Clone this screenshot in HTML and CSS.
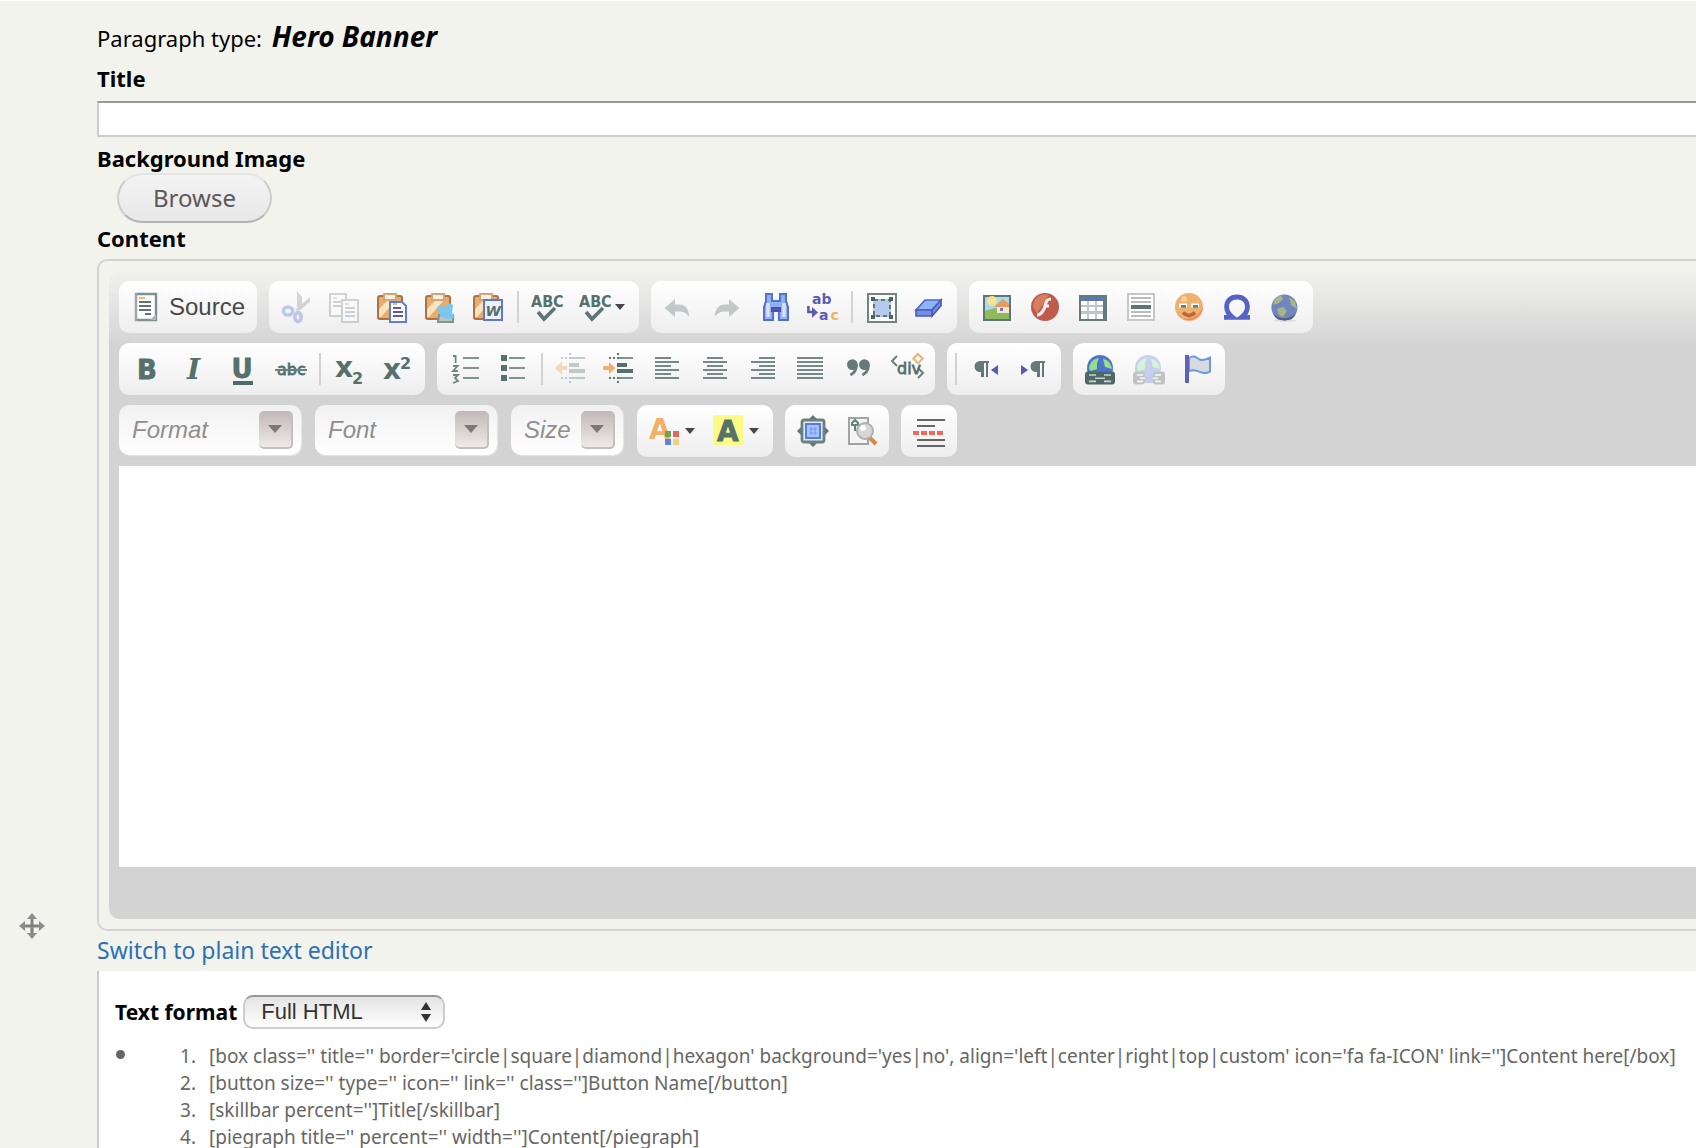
FILE: index.html
```html
<!DOCTYPE html>
<html lang="en">
<head>
<meta charset="utf-8">
<title>Hero Banner</title>
<link rel="stylesheet" href="styles.css">
</head>
<body>
<div class="row">
  <div class="handle">
    <svg viewBox="0 0 26 26" width="26" height="26"><path d="M13 3v20M3 13h20" stroke="#808080" stroke-width="3"/><path d="M13 0l5 6H8zM13 26l5-6H8zM0 13l6-5v10zM26 13l-6-5v10z" fill="#8c8c8c"/></svg>
  </div>
  <form class="form">
    <p class="type">Paragraph type: <em class="type-name">Hero Banner</em></p>
    <label class="label" for="title">Title</label>
    <input class="text-input" id="title" type="text">
    <span class="label label-image">Background Image</span>
    <button class="browse" type="button">Browse</button>
    <span class="label label-content">Content</span>

    <div class="editor">
      <div class="editor-inner">
        <div class="bar">
          <div class="group">
            <button class="tool tool-source" type="button">
              <svg class="icon" viewBox="0 0 16 16"><path d="M2.500 1.500h10v13h-10z" fill="#fff" stroke="#7b9290" stroke-width="1.200"/><path d="M2.500 1v14" stroke="#a5a5a5"/><path d="M4 3.500h3" stroke="#fbb865"/><path d="M4 5.500h6M4 7.500h6M4 9.500h6M7 11.500h3" stroke="#5f7474"/><path d="M9.500 14.500l3-3v3z" fill="#a9b7b5"/></svg>
              <span class="tool-label">Source</span>
            </button>
          </div>
          <div class="group">
            <button class="tool" type="button" aria-label="Cut"><svg class="icon faded" viewBox="0 0 16 16"><path d="M8 0l2.500 3v6L8 8zM14.500 3v2.500L9 10 7 9.500z" fill="#8f918f"/><g fill="none" stroke="#5474dc" stroke-width="1.800"><ellipse cx="3.500" cy="10" rx="2.300" ry="2"/><ellipse cx="8.500" cy="13" rx="1.600" ry="2.200"/></g></svg></button>
            <button class="tool" type="button" aria-label="Copy"><svg class="icon faded" viewBox="0 0 16 16"><g fill="#fff" stroke="#80918d"><path d="M.5 1.500h8v11h-8z"/><path d="M6.500 4.500h8v11h-8z"/></g><path d="M2 3.500h2M8 6.500h2" stroke="#f5a04a"/><path d="M2 5.500h4M2 7.500h4M8 8.500h5M8 10.500h5M8 12.500h5" stroke="#80918d"/></svg></button>
            <button class="tool" type="button" aria-label="Paste"><svg class="icon" viewBox="0 0 16 16"><rect x=".5" y="2.500" width="12" height="11.500" rx="1" fill="#e6ad70" stroke="#b0703f"/><path d="M1 9l5-5h4l-8 9H1z" fill="#fbe3bd"/><path d="M3.500 1.500h6v3h-6z" fill="#f4efe4" stroke="#d0a878"/><path d="M6.500 5.500h6l2 2v8h-8z" fill="#fff" stroke="#5f7be0"/><path d="M8 6.500h2" stroke="#f5b56a"/><path d="M8 8.500h4M8 10.500h5M8 12.500h5" stroke="#5c58b4"/></svg></button>
            <button class="tool" type="button" aria-label="Paste as plain text"><svg class="icon" viewBox="0 0 16 16"><rect x=".5" y="2.500" width="12" height="11.500" rx="1" fill="#e6ad70" stroke="#b0703f"/><path d="M1 9l5-5h4l-8 9H1z" fill="#fbe3bd"/><path d="M3.500 1.500h6v3h-6z" fill="#f4efe4" stroke="#d0a878"/><path d="M7 12h7v3.500H6.500z" fill="#b9c4bd" stroke="#7f9893"/><path d="M6 8l2-1 2 1.500L12 6l2 1-.5 4 1.500 2-3 1-4-1z" fill="#7ac6ef"/></svg></button>
            <button class="tool" type="button" aria-label="Paste from Word"><svg class="icon" viewBox="0 0 16 16"><rect x=".5" y="2.500" width="12" height="11.500" rx="1" fill="#e6ad70" stroke="#b0703f"/><path d="M1 9l5-5h4l-8 9H1z" fill="#fbe3bd"/><path d="M3.500 1.500h6v3h-6z" fill="#f4efe4" stroke="#d0a878"/><path d="M5.500 4.500h9v10h-9z" fill="#eef2fa" stroke="#5d77d2"/><text class="glyph" x="6.200" y="12.500" font-size="7" font-style="italic">W</text></svg></button>
            <span class="sep"></span>
            <button class="tool" type="button" aria-label="Check spelling"><svg class="icon" viewBox="0 0 16 16"><text class="glyph narrow" x="0" y="8" font-size="8">ABC</text><path d="M3.500 10.500l3 3.500L12 8.500" fill="none" stroke="#5f7474" stroke-width="1.800"/></svg></button>
            <button class="tool tool-menu" type="button" aria-label="Spell check as you type"><svg class="icon" viewBox="0 0 16 16"><text class="glyph narrow" x="0" y="8" font-size="8">ABC</text><path d="M3.500 10.500l3 3.500L12 8.500" fill="none" stroke="#5f7474" stroke-width="1.800"/></svg><span class="caret"></span></button>
          </div>
          <div class="group">
            <button class="tool" type="button" aria-label="Undo"><svg class="icon faded" viewBox="0 0 16 16"><path d="M.8 8.500L6 4v2.800h2c3 0 5 2 5 6-1.500-2-3-2.500-5-2.500H6V13z" fill="#5f7474"/></svg></button>
            <button class="tool" type="button" aria-label="Redo"><svg class="icon faded" viewBox="0 0 16 16"><path d="M14.200 8.500L9 4v2.800H7c-3 0-5 2-5 6 1.500-2 3-2.500 5-2.500h2V13z" fill="#5f7474"/></svg></button>
            <button class="tool" type="button" aria-label="Find"><svg class="icon" viewBox="0 0 16 16"><path d="M3.500 1.500h3V5h4V1.500h3V5l1 3v6.500h-4.500V10H7v4.500H2.500V8l1-3z" fill="#8fb2f2" stroke="#5371cf"/><path d="M6 8h5v2.500H6z" fill="#544fb2"/><path d="M4.500 6v7M12.500 6v7" stroke="#dcdfe2" stroke-width="1.800"/></svg></button>
            <button class="tool" type="button" aria-label="Replace"><svg class="icon" viewBox="0 0 16 16"><text class="glyph violet" x="2.500" y="6.500" font-size="7">ab</text><text class="glyph violet" x="6" y="14.500" font-size="7">a<tspan class="orange" dx="1">c</tspan></text><path d="M.7 7.500v3h2.500" fill="none" stroke="#5b5ab5" stroke-width="1.300"/><path d="M2.500 8l3 2.700-3 2.700z" fill="#5b5ab5"/></svg></button>
            <span class="sep"></span>
            <button class="tool" type="button" aria-label="Select all"><svg class="icon" viewBox="0 0 16 16"><path d="M1.500 1.500h14v14h-14z" fill="#fff" stroke="#708482"/><path d="M4 4h9v9H4z" fill="#b5c9ef"/><path d="M4.500 4.500h8v8h-8z" fill="none" stroke="#5f7474" stroke-dasharray="2 1.500"/><path d="M3 3h2v2H3zM12 3h2v2h-2zM3 12h2v2H3zM12 12h2v2h-2z" fill="#486561"/></svg></button>
            <button class="tool" type="button" aria-label="Remove format"><svg class="icon" viewBox="0 0 16 16"><path d="M1.500 9.500L6 4.500h8L9.500 9.500z" fill="#8cb5f5" stroke="#5065c9" stroke-width=".8"/><path d="M1.500 9.500h8v3h-8zM9.500 9.500L14 4.500v2.800L9.500 12.500z" fill="#6e93e6" stroke="#5255b6" stroke-width=".8"/></svg></button>
          </div>
          <div class="group">
            <button class="tool" type="button" aria-label="Image"><svg class="icon" viewBox="0 0 16 16"><path d="M1.500 2.500h13v12h-13z" fill="#a6daf0" stroke="#5f7474"/><path d="M2 10l5-1.500 7 1.500v4H2z" fill="#8fb95a"/><circle cx="5.500" cy="5" r="2.500" fill="#f6e38b"/><path d="M8 8h6v3H8z" fill="#f5e8d4"/><path d="M7 7.500L11 4l3 2.500V8H7z" fill="#ec9a57"/><path d="M9.500 8.500h1.500v1.500H9.500z" fill="#7276bd"/></svg></button>
            <button class="tool" type="button" aria-label="Flash"><svg class="icon" viewBox="0 0 16 16"><circle cx="8" cy="8" r="7" fill="#c05a4e"/><path d="M2 8a6 6 0 0 1 8-6L4 11z" fill="#d87f60"/><path d="M11 4C8 4 8.500 7 7.500 9S5.500 12 4 12M7.500 7.500H10" fill="none" stroke="#fbeeea" stroke-width="1.600"/></svg></button>
            <button class="tool" type="button" aria-label="Table"><svg class="icon" viewBox="0 0 16 16"><path d="M1 2h14v13H1z" fill="#667b79"/><path d="M2 3h12v1.500H2z" fill="#5677ce"/><path d="M2 5h3v2.200H2zM6 5h3v2.200H6zM10 5h3v2.200h-3zM2 8h3v2.200H2zM6 8h3v2.200H6zM10 8h3v2.200h-3zM2 11.200h3V14H2zM6 11.200h3V14H6zM10 11.200h3V14h-3z" fill="#fff"/><path d="M5 5h1v9H5zM9 5h1v9H9zM2 7.200h11V8H2zM2 10.200h11v1H2z" fill="#c0c8c8"/></svg></button>
            <button class="tool" type="button" aria-label="Horizontal line"><svg class="icon" viewBox="0 0 16 16"><path d="M1.500 1.500h13v13h-13z" fill="#fff" stroke="#c4c8c7"/><path d="M3 3.500h10M3 5.500h10M3 10.500h10M3 12.500h10" stroke="#b7bcbb"/><path d="M3 8h10" stroke="#5f7474" stroke-width="2"/></svg></button>
            <button class="tool" type="button" aria-label="Smiley"><svg class="icon" viewBox="0 0 16 16"><circle cx="8" cy="8" r="7" fill="#efb071"/><path d="M15 8a7 7 0 0 1-10 6c5 0 8-2 10-6z" fill="#f58a62"/><circle cx="5.500" cy="4" r="1.500" fill="#f7d089"/><path d="M3 6.300h4v2H3zM9 6.300h4v2H9z" fill="#fff"/><path d="M4 7h2.500v1.400H4zM10 7h2.500v1.400H10z" fill="#637f7a"/><path d="M5 10.800c2 2 4 2 6 0" fill="none" stroke="#b86a3b" stroke-width="1.800"/></svg></button>
            <button class="tool" type="button" aria-label="Special character"><svg class="icon" viewBox="0 0 16 16"><path d="M1.500 13.200h4.300c-2.200-1.700-3-3.200-3-5.200 0-3 2-5 5.200-5s5.200 2 5.200 5c0 2-.8 3.500-3 5.200h4.300" fill="none" stroke="#5562c6" stroke-width="2.400"/></svg></button>
            <button class="tool" type="button" aria-label="Page"><svg class="icon" viewBox="0 0 16 16"><ellipse cx="8" cy="14.800" rx="6" ry=".7" fill="#e3dcdc"/><circle cx="7.700" cy="8.200" r="6.500" fill="#7186bc"/><path d="M2 11c2 3 8 4 11.500 0-1 3-3 3.700-5.700 3.700S3 14 2 11z" fill="#4f6187"/><path d="M3 4l3-2 1 2-2 2-3 1zM10 3l3 2 1 4-3-2zM4 9l3-1 2 2-2 3-2-1z" fill="#a6b58a"/></svg></button>
          </div>
        </div>

        <div class="bar">
          <div class="group">
            <button class="tool" type="button" aria-label="Bold"><svg class="icon" viewBox="0 0 16 16"><text class="glyph heavy" x="3" y="13" font-size="13">B</text></svg></button>
            <button class="tool" type="button" aria-label="Italic"><svg class="icon" viewBox="0 0 16 16"><text class="glyph serif" x="4" y="13" font-size="14" font-style="italic">I</text></svg></button>
            <button class="tool" type="button" aria-label="Underline"><svg class="icon" viewBox="0 0 16 16"><text class="glyph heavy" x="2.300" y="12.500" font-size="13">U</text><path d="M3 15h10" stroke="#4c6b69" stroke-width="2"/></svg></button>
            <button class="tool" type="button" aria-label="Strike through"><svg class="icon" viewBox="0 0 16 16"><text class="glyph plain heavy" x="1" y="11" font-size="8">abc</text><path d="M0 8.500h16" stroke="#6b807e"/></svg></button>
            <span class="sep"></span>
            <button class="tool" type="button" aria-label="Subscript"><svg class="icon" viewBox="0 0 16 16"><text class="glyph" x="1" y="12" font-size="14">x</text><text class="glyph" x="9.500" y="15.500" font-size="8">2</text></svg></button>
            <button class="tool" type="button" aria-label="Superscript"><svg class="icon" viewBox="0 0 16 16"><text class="glyph" x="1" y="13" font-size="14">x</text><text class="glyph" x="9.500" y="8" font-size="8">2</text></svg></button>
          </div>
          <div class="group">
            <button class="tool" type="button" aria-label="Numbered list"><svg class="icon" viewBox="0 0 16 16"><path d="M7 2.500h8M7 7.500h8M7 12.500h8" stroke="#82938f"/><path d="M2 1.500h1.300v3.500M2 6.500h2.300L2 9h2.500M2 11h2.500l-1.500 1.500L4.500 14 2 15" fill="none" stroke="#6e8481" stroke-width=".9"/></svg></button>
            <button class="tool" type="button" aria-label="Bulleted list"><svg class="icon" viewBox="0 0 16 16"><path d="M6 2.500h8M6 7.500h8M6 12.500h8" stroke="#82938f"/><path d="M2 1h3v3H2zM2 6h3v3H2zM2 11h3v3H2z" fill="#56706c"/></svg></button>
            <span class="sep"></span>
            <button class="tool" type="button" aria-label="Decrease indent"><svg class="icon faded" viewBox="0 0 16 16"><path d="M7 2.500h8M7 12.500h8" stroke="#5f7474"/><path d="M7 6h5M7 9h8" stroke="#5f7474" stroke-width="2"/><path d="M7.500 0v4M7.500 12v4M3 2.500h3M3 12.500h3" stroke="#5f7474" stroke-dasharray="1 1"/><path d="M0 7.500L3.500 4v2.500H6v2H3.500V11z" fill="#f4a24f"/></svg></button>
            <button class="tool" type="button" aria-label="Increase indent"><svg class="icon" viewBox="0 0 16 16"><path d="M7 2.500h8M7 12.500h8" stroke="#82938f"/><path d="M7 6h5M7 9h8" stroke="#56706c" stroke-width="2"/><path d="M7.500 0v4M7.500 12v4M3 2.500h3M3 12.500h3" stroke="#5f7474" stroke-dasharray="1 1"/><path d="M6.200 7.500L3 4.500v2H0v2h3v2z" fill="#f2b069"/></svg></button>
            <button class="tool" type="button" aria-label="Align left"><svg class="icon" viewBox="0 0 16 16"><path d="M2 2.500h8M2 4.500h12M2 6.500h8M2 8.500h12M2 10.500h8M2 12.500h12" stroke="#758986"/></svg></button>
            <button class="tool" type="button" aria-label="Center"><svg class="icon" viewBox="0 0 16 16"><path d="M4 2.500h8M2 4.500h12M4 6.500h8M2 8.500h12M4 10.500h8M2 12.500h12" stroke="#758986"/></svg></button>
            <button class="tool" type="button" aria-label="Align right"><svg class="icon" viewBox="0 0 16 16"><path d="M6 2.500h8M2 4.500h12M6 6.500h8M2 8.500h12M6 10.500h8M2 12.500h12" stroke="#758986"/></svg></button>
            <button class="tool" type="button" aria-label="Justify"><svg class="icon" viewBox="0 0 16 16"><path d="M1 2.500h13M1 4.500h13M1 6.500h13M1 8.500h13M1 10.500h13M1 12.500h13" stroke="#758986"/></svg></button>
            <button class="tool" type="button" aria-label="Block quote"><svg class="icon" viewBox="0 0 16 16"><circle cx="4.700" cy="5.800" r="2.700" fill="#657a78"/><circle cx="10.700" cy="5.800" r="2.700" fill="#657a78"/><path d="M6.700 6c0 2.500-1 4-3 5M12.700 6c0 2.500-1 4-3 5" fill="none" stroke="#657a78" stroke-width="1.400"/></svg></button>
            <button class="tool" type="button" aria-label="Div container"><svg class="icon" viewBox="0 0 16 16"><path d="M3 1.500L.5 4 3 6.500M13.500 7.500L16 10 13.500 12.500" fill="none" stroke="#6b807e"/><text class="glyph plain heavy" x="3" y="10.500" font-size="8">div</text><path d="M13.500 .5l2.300 2.300-2.300 2.300-2.300-2.300z" fill="#fff" stroke="#f2b069"/></svg></button>
          </div>
          <div class="group">
            <span class="sep"></span>
            <button class="tool" type="button" aria-label="Text direction left to right"><svg class="icon" viewBox="0 0 16 16"><path d="M5.500 4H10v1H9.500v7h-1V5h-1v7H6V9.500H5.500a2.500 2.500 0 0 1 0-5.500z" fill="#657a78"/><path d="M14.500 6v5L11 8.500z" fill="#5b5ab5"/></svg></button>
            <button class="tool" type="button" aria-label="Text direction right to left"><svg class="icon" viewBox="0 0 16 16"><path d="M9.500 4H14v1h-.5v7h-1V5h-1v7H10V9.500h-.5a2.500 2.500 0 0 1 0-5.500z" fill="#657a78"/><path d="M2 6v5l3.500-2.500z" fill="#5b5ab5"/></svg></button>
          </div>
          <div class="group">
            <button class="tool" type="button" aria-label="Link"><svg class="icon" viewBox="0 0 16 16"><circle cx="7.500" cy="7.500" r="6.500" fill="#4f74d0"/><path d="M2 8c0-3 2-5 5-5.500L6 5v3l-3 1zM9 3c2 0 4 2 4.500 5L10 7z" fill="#92e087"/><rect x="0" y="9.200" width="15" height="6.600" rx="1.500" fill="#4f6966"/><path d="M2 11h3.500M9.500 11H13M2 14.200h3.500M9.500 14.200H13M5 12.600h5" stroke="#c9d2d0" stroke-width=".8"/></svg></button>
            <button class="tool" type="button" aria-label="Unlink"><svg class="icon faded" viewBox="0 0 16 16"><circle cx="7.500" cy="7.500" r="6.500" fill="#6a8ae2"/><path d="M6 9v6h4V9z" fill="#6a8ae2"/><path d="M2 8c0-3 2-5 5-5.500L6 5v3l-3 1zM9 3c2 0 4 2 4.500 5L10 7z" fill="#9cf08f"/><rect x="0" y="9.200" width="6" height="6.600" rx="1.500" fill="#5c6f6c"/><rect x="10" y="9.200" width="6" height="6.600" rx="1.500" fill="#5c6f6c"/><path d="M2 11h3M11 11h3M2 14.200h3M11 14.200h3M3.500 12.600H6M10 12.600h2.500" stroke="#fff" stroke-width=".8"/></svg></button>
            <button class="tool" type="button" aria-label="Anchor"><svg class="icon" viewBox="0 0 16 16"><path d="M4 2.500c3-2 4 .500 6 1 1.500.2 3-.5 4.500-1.200v7c-3 1.500-4 .5-5.500 0S6 8 4 9z" fill="#d7dadf" stroke="#6a97e6"/><path d="M3 1v14" stroke="#5b62bd" stroke-width="2"/></svg></button>
          </div>
        </div>

        <div class="bar bar-combos">
          <button class="combo" type="button"><span>Format</span><span class="combo-arrow"><span class="caret"></span></span></button>
          <button class="combo" type="button"><span>Font</span><span class="combo-arrow"><span class="caret"></span></span></button>
          <button class="combo combo-small" type="button"><span>Size</span><span class="combo-arrow"><span class="caret"></span></span></button>
          <div class="bar">
            <div class="group">
              <button class="tool tool-menu" type="button" aria-label="Text color"><svg class="icon" viewBox="0 0 16 16"><text class="glyph orange" x="0" y="12" font-size="14">A</text><path d="M8 8h3v3H8z" fill="#6ea554"/><path d="M12 8h3v3h-3z" fill="#ea6558"/><path d="M8 12h3v3H8z" fill="#5e83e8"/><path d="M12 12h3v3h-3z" fill="#efd17a"/></svg><span class="caret"></span></button>
              <button class="tool tool-menu" type="button" aria-label="Background color"><svg class="icon" viewBox="0 0 16 16"><path d="M0 0h15v15H0z" fill="#fdfb84"/><text class="glyph heavy" x="2" y="13" font-size="14">A</text></svg><span class="caret"></span></button>
            </div>
            <div class="group">
              <button class="tool" type="button" aria-label="Maximize"><svg class="icon" viewBox="0 0 16 16"><path d="M8 0l2.500 2.500h-5zM8 16l2.500-2.500h-5zM0 8l2.500-2.500v5zM16 8l-2.500-2.500v5z" fill="#5f7474"/><rect x="2.500" y="2.500" width="11" height="11" rx="1" fill="#dfe8f8" stroke="#6c817f" stroke-width="1.400"/><path d="M4.500 4.500h7v7h-7z" fill="#a3c4f8" stroke="#5a7bd9"/><path d="M6 7h4M6 9h4M7 6v4M9 6v4" stroke="#7899ec" stroke-width=".5"/></svg></button>
              <button class="tool" type="button" aria-label="Preview"><svg class="icon" viewBox="0 0 16 16"><path d="M2 1.500h9.500v13H2z" fill="#f4f4f4" stroke="#a0a4a3"/><path d="M3.500 5V4l1.500-1.500L6.500 4v1zM5 5v3M3.500 5h4" fill="none" stroke="#65807b"/><path d="M12 11l3.500 3.500" stroke="#d98a46" stroke-width="2"/><circle cx="10" cy="8" r="4" fill="#d6d6d6" stroke="#b0b0b0"/><circle cx="9" cy="6.500" r="1.500" fill="#fff"/></svg></button>
            </div>
            <div class="group">
              <button class="tool" type="button" aria-label="Page break"><svg class="icon" viewBox="0 0 16 16"><path d="M2 2.500h14M2 5.500h9M2 12.500h14M2 15.500h14" stroke="#666"/><path d="M0 9h16" stroke="#ee6a5f" stroke-width="2" stroke-dasharray="3 1"/></svg></button>
            </div>
          </div>
        </div>
        <textarea class="canvas" aria-label="Content"></textarea>
      </div>
    </div>

    <a class="switch" href="#">Switch to plain text editor</a>

    <div class="format">
      <div class="format-row">
        <label class="format-label" for="format">Text format</label>
        <span class="select-wrap">
          <select class="select" id="format"><option>Full HTML</option></select>
          <svg class="select-arrows" viewBox="0 0 10 20" width="10" height="20"><path d="M5 0l5 8H0zM5 20l5-8H0z" fill="#333"/></svg>
        </span>
      </div>
      <ul class="tips">
        <li>
          <ol class="codes">
            <li>[box class='' title='' border='circle|square|diamond|hexagon' background='yes|no', align='left|center|right|top|custom' icon='fa fa-ICON' link='']Content here[/box]</li>
            <li>[button size='' type='' icon='' link='' class='']Button Name[/button]</li>
            <li>[skillbar percent='']Title[/skillbar]</li>
            <li>[piegraph title='' percent='' width='']Content[/piegraph]</li>
          </ol>
        </li>
      </ul>
    </div>
  </form>
</div>
</body>
</html>
```

FILE: styles.css
```css
* { box-sizing: border-box; }

body {
  margin: 0;
  min-height: 100vh;
  overflow: hidden;
  border-top: 1px solid #fff;
  background: #f3f3ee;
  color: #000;
  font: 22px/40px "Noto Sans", "Open Sans", sans-serif;
}

button, input, select, textarea { margin: 0; font: inherit; }

.row { display: grid; grid-template-columns: 97px 1fr; }

.handle { padding: 912px 0 0 19px; line-height: 0; }

/* The form is wider than the window, as its fields run past the right edge. */
.form {
  display: flex;
  flex-direction: column;
  align-items: flex-start;
  width: calc(100% + 40px);
  padding-top: 17px;
}

.type { height: 40px; margin: 0; line-height: 40px; }
.type-name { margin-left: 4px; font-size: 28px; font-weight: 700; line-height: 36px; }

.label { font-weight: 700; line-height: 40px; }

.text-input {
  width: 100%;
  height: 36px;
  margin-top: 3px;
  border: 2px solid #ccc;
  border-top-color: #999;
  background: #fff;
}

.label-image { height: 36px; line-height: 42px; }
.label-content { height: 36px; line-height: 30px; }

.browse {
  height: 50px;
  margin-left: 20px;
  padding: 0 34px;
  border: 2px solid #ccc;
  border-color: #e4e4e4 #ccc #b4b4b4;
  border-radius: 25px;
  background: linear-gradient(#f3f3f3, #e8e8e8);
  color: #5a5a5a;
  font-size: 24px;
  line-height: 40px;
}

.editor {
  width: 100%;
  padding: 10px;
  border: 2px solid #d3d3d3;
  border-radius: 10px;
}

.editor-inner {
  display: flex;
  flex-direction: column;
  gap: 10px;
  padding: 10px 10px 52px;
  border-radius: 10px;
  background: linear-gradient(#f1f1f0, #d3d3d3 76px);
}

.bar { display: flex; gap: 12px; }
.bar-combos { gap: 14px; }

.group {
  display: flex;
  height: 52px;
  padding: 0 4px;
  border-radius: 10px;
  background: linear-gradient(#fff, #eee);
}

.tool {
  display: flex;
  align-items: center;
  gap: 4px;
  width: 48px;
  padding: 0 8px;
  border: 0;
  background: none;
}
.tool-menu { width: 64px; }
.tool-source { gap: 6px; width: 130px; }
.tool-label {
  color: #474747;
  font: 24px/32px "Liberation Sans", Arial, sans-serif;
}

.icon { flex: none; width: 32px; height: 32px; overflow: visible; fill: none; }
.faded { opacity: .35; }
.glyph { fill: #56706c; font-family: "DejaVu Sans", sans-serif; font-weight: 700; }
.serif { font-family: "DejaVu Serif", serif; }
.plain { font-weight: 400; }
.narrow { font-family: "DejaVu Sans Condensed", "Liberation Sans", sans-serif; }
.heavy { stroke: #56706c; stroke-width: .4px; }
.violet { fill: #5b5ab5; }
.orange { fill: #f2b069; }

.sep { width: 2px; height: 32px; margin: 10px 4px; background: #d3d3d3; }

.caret {
  flex: none;
  width: 0;
  height: 0;
  border: 5px solid transparent;
  border-top: 6px solid #474747;
  border-bottom: 0;
}

.combo {
  display: flex;
  align-items: center;
  justify-content: space-between;
  width: 182px;
  height: 50px;
  padding: 0 8px 0 13px;
  border: 0;
  border-radius: 10px;
  background: linear-gradient(#f1f1f1, #fff);
  box-shadow: 1px 1px 1px #e6e6e6;
  color: #8f8f8f;
  font: italic 24px/32px "Liberation Sans", Arial, sans-serif;
}
.combo-small { width: 112px; }

.combo-arrow {
  display: flex;
  align-items: center;
  justify-content: center;
  width: 34px;
  height: 38px;
  border-right: 2px solid #c4bfbf;
  border-bottom: 2px solid #c4bfbf;
  border-radius: 5px;
  background: linear-gradient(#c1b7b7, #efe9e9);
}
.combo-arrow .caret { border-width: 8px 7px 0; border-top-color: #7d7878; }

.canvas {
  width: 100%;
  height: 401px;
  margin-top: -1px;
  padding: 16px;
  border: 0;
  background: #fff;
  resize: none;
}

.switch {
  height: 40px;
  color: #2a70b8;
  font-size: 23px;
  line-height: 38px;
  text-decoration: none;
}

.format {
  width: 100%;
  padding: 20px 16px 0;
  border-left: 2px solid #ccc;
  background: #fff;
}

.format-row { display: flex; align-items: center; gap: 6px; height: 42px; }
.format-label { font-size: 21px; font-weight: 700; line-height: 40px; }

.select-wrap { display: grid; align-items: center; }
.select {
  grid-area: 1 / 1;
  width: 202px;
  height: 34px;
  padding: 0 16px;
  border: 2px solid #ccc;
  border-top-color: #999;
  border-radius: 10px;
  background: linear-gradient(#e4e4e4, #fff);
  color: #333;
  font: 22px/28px "Liberation Sans", Arial, sans-serif;
  appearance: none;
}
.select-arrows { grid-area: 1 / 1; justify-self: end; margin-right: 14px; pointer-events: none; }

.tips {
  margin: 7px 0 0;
  padding-left: 26px;
  color: #666;
  font-size: 19px;
  line-height: 27px;
}
.tips > li::marker { font-size: 26px; }
.codes { margin: 0; padding-left: 60px; }
.codes > li { padding-left: 8px; white-space: nowrap; }
```
